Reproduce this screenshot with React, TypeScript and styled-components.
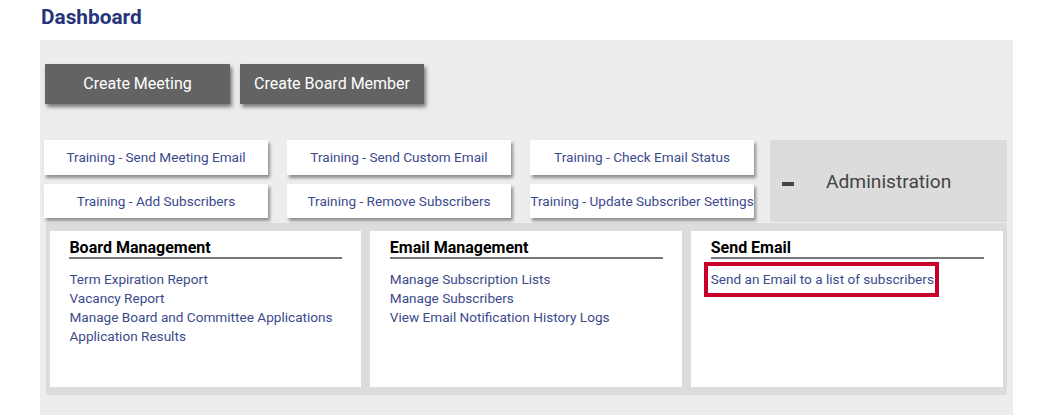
import React from "react";
import styled, { createGlobalStyle } from "styled-components";

const trainingLinks = [
  "Training - Send Meeting Email",
  "Training - Send Custom Email",
  "Training - Check Email Status",
  "Training - Add Subscribers",
  "Training - Remove Subscribers",
  "Training - Update Subscriber Settings",
];

const sections = [
  {
    title: "Board Management",
    links: [
      "Term Expiration Report",
      "Vacancy Report",
      "Manage Board and Committee Applications",
      "Application Results",
    ],
  },
  {
    title: "Email Management",
    links: [
      "Manage Subscription Lists",
      "Manage Subscribers",
      "View Email Notification History Logs",
    ],
  },
  {
    title: "Send Email",
    links: ["Send an Email to a list of subscribers"],
    highlight: true,
  },
];

export default function App() {
  return (
    <>
      <GlobalStyle />
      <Page>
        <Title>Dashboard</Title>
        <Panel>
          <Toolbar>
            <CreateButton $width={185}>Create Meeting</CreateButton>
            <CreateButton $width={184}>Create Board Member</CreateButton>
          </Toolbar>
          <TopRow>
            <TrainingGrid>
              {trainingLinks.map((link) => (
                <TrainingTile key={link} href="#">
                  {link}
                </TrainingTile>
              ))}
            </TrainingGrid>
            <AdminHeader>
              <Dash />
              <AdminTitle>Administration</AdminTitle>
            </AdminHeader>
          </TopRow>
          <AdminBody>
            {sections.map((section) => (
              <Card key={section.title}>
                <CardTitle>{section.title}</CardTitle>
                <LinkList>
                  {section.links.map((link) => (
                    <li key={link}>
                      <CardLink href="#" $highlight={section.highlight}>
                        {link}
                      </CardLink>
                    </li>
                  ))}
                </LinkList>
              </Card>
            ))}
          </AdminBody>
          <PanelFoot />
        </Panel>
      </Page>
    </>
  );
}

const GlobalStyle = createGlobalStyle`
  html, body {
    margin: 0;
    background: #fff;
    overflow: hidden;
  }

  body {
    font-family: Roboto, "Liberation Sans", sans-serif;
  }
`;

const Page = styled.div`
  width: 1055px;
  height: 415px;
  padding-left: 40px;
  box-sizing: border-box;
  overflow: hidden;
`;

const Title = styled.h1`
  margin: 0;
  height: 40px;
  padding: 6px 0 0 1px;
  box-sizing: border-box;
  font-size: 20.8px;
  line-height: 23px;
  font-weight: 700;
  color: #26357a;
`;

const Panel = styled.div`
  width: 973px;
  background: #ededed;
  padding: 24px 6px 0 4px;
  box-sizing: border-box;
`;

const Toolbar = styled.div`
  display: flex;
  gap: 10px;
  padding-left: 1px;
  margin-bottom: 36px;
`;

const CreateButton = styled.button<{ $width: number }>`
  width: ${(p) => p.$width}px;
  height: 40px;
  padding: 0 0 2px;
  border: 0;
  background: #636363;
  color: #fff;
  font-family: inherit;
  font-size: 16px;
  box-shadow: 2px 3px 4px rgba(0, 0, 0, 0.5);
`;

const TopRow = styled.div`
  display: flex;
  gap: 16px;
`;

const TrainingGrid = styled.div`
  display: grid;
  grid-template-columns: repeat(3, 224px);
  grid-template-rows: 35px 34px;
  column-gap: 19px;
  row-gap: 9px;
`;

const TrainingTile = styled.a`
  display: flex;
  align-items: center;
  justify-content: center;
  padding-bottom: 1px;
  box-sizing: border-box;
  background: #fff;
  color: #3c4a8c;
  font-size: 13.6px;
  white-space: nowrap;
  text-decoration: none;
  box-shadow: 2px 3px 3px rgba(0, 0, 0, 0.4);
`;

const AdminHeader = styled.div`
  width: 237px;
  height: 82px;
  display: flex;
  align-items: center;
  padding-left: 12px;
  box-sizing: border-box;
  background: #dcdcdc;
`;

const Dash = styled.span`
  width: 12px;
  height: 4px;
  margin-top: 6px;
  background: #444;
`;

const AdminTitle = styled.span`
  margin-left: 32px;
  font-size: 19.2px;
  color: #444;
`;

const AdminBody = styled.div`
  display: grid;
  grid-template-columns: 311px 311.5px 312px;
  column-gap: 9.4px;
  margin: 1px 0 0 2px;
  padding: 8px 4px;
  background: #dcdcdc;
`;

const Card = styled.section`
  height: 156px;
  padding: 8px 19.4px 0;
  box-sizing: border-box;
  background: #fff;
`;

const CardTitle = styled.h2`
  margin: 0 0 10.7px;
  height: 18px;
  font-size: 16px;
  line-height: 18px;
  font-weight: 700;
  color: #000;
  border-bottom: 2px solid #777;
`;

const LinkList = styled.ul`
  margin: 0;
  padding: 0;
  list-style: none;
  font-size: 13.6px;
  line-height: 19.2px;
`;

const CardLink = styled.a<{ $highlight?: boolean }>`
  color: #3c4a8c;
  text-decoration: none;
  ${(p) =>
    p.$highlight &&
    `
    display: inline-block;
    margin: -4px 0 -4px -3px;
    padding: 4px 1px 4px 3px;
    outline: 4px solid #c8002a;
  `}
`;

const PanelFoot = styled.div`
  height: 40px;
`;
